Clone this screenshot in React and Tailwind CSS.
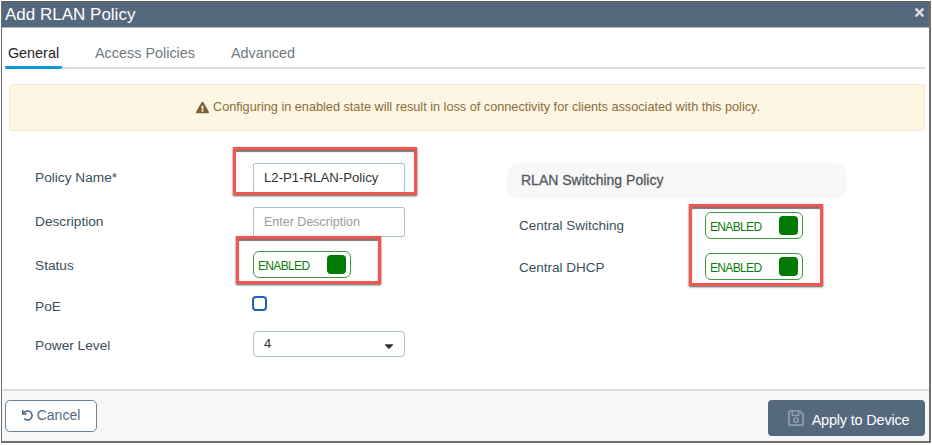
import React from 'react';
import { FaTimes, FaExclamationTriangle, FaUndo, FaRegSave, FaCaretDown } from 'react-icons/fa';

const Toggle = () => (
    <div className="w-[98px] h-[27px] border border-[#3f9a3f] rounded-[6px] bg-white flex items-center justify-between pl-[4px] pr-[4px]">
        <span className="text-[12px] tracking-[-0.65px] text-[#0a7d0a] pt-[2px]">ENABLED</span>
        <span className="w-[19px] h-[19px] rounded-[4px] bg-[#007a00]"></span>
    </div>
);

// red annotation frame that sits over the field
const Highlight = ({ className }) => (
    <div className={`absolute border-[3px] border-[#f2574e] shadow-[0_1px_2px_#555,inset_0_2px_1px_#777] pointer-events-none ${className}`}></div>
);

const Row = ({ label, labelClass, className, children }) => (
    <div className={`flex items-center ${className}`}>
        <span className={`w-[218px] text-[13.7px] text-[#39505a] ${labelClass}`}>{label}</span>
        <div className="relative">{children}</div>
    </div>
);

const inputClass = "w-[152px] h-[30px] border border-[#a6c4d2] rounded-[2px] px-[10px] flex items-center";

const App = () => {
    return (
        <div className="w-[932px] h-[445px] bg-white font-['Liberation_Sans',sans-serif] pt-px pl-px pr-px pb-[2px]">
            <div className="h-full border-l border-r-2 border-b-2 border-[#6e6e6e] flex flex-col">

                {/* Title bar */}
                <div className="h-[27px] shrink-0 bg-[#54697e] border-t border-[#5c5c5c] border-b border-b-[#a9b6c2] flex items-center justify-between pl-[3px] pr-[3px]">
                    <span className="text-[17px] text-white">Add RLAN Policy</span>
                    <FaTimes className="text-[#d9dfe4] mb-[4px]" size={13} />
                </div>

                {/* Tabs */}
                <div className="h-[41px] shrink-0 ml-[3px] mr-[4px] border-b-2 border-[#dcdcdc] flex items-end text-[14.4px]">
                    <div className="w-[57px] h-[27px] pt-[1px] -mb-[2px] border-b-[3px] border-[#0d9ad8] rounded-b-[2px] text-center text-[#1d2327]">General</div>
                    <div className="ml-[33px] h-[27px] pt-[3px] text-[#6f7a80]">Access Policies</div>
                    <div className="ml-[36px] h-[27px] pt-[3px] text-[#6f7a80]">Advanced</div>
                </div>

                {/* Warning */}
                <div className="h-[47px] shrink-0 mt-[15px] ml-[7px] mr-[4px] pl-[22px] bg-[#fdf6e3] border border-[#f7e9c9] rounded-[3px] flex items-center justify-center gap-[4px] text-[12.7px] text-[#8a6d3b]">
                    <FaExclamationTriangle className="text-[#7d6032]" size={13} />
                    <span>Configuring in enabled state will result in loss of connectivity for clients associated with this policy.</span>
                </div>

                {/* Form */}
                <div className="flex-1 flex pt-[32px] pl-[33px]">
                    <div className="w-[472px] flex flex-col">
                        <Row label="Policy Name*" className="h-[30px]">
                            <div className={`${inputClass} text-[13.2px] text-[#333]`}>L2-P1-RLAN-Policy</div>
                            <Highlight className="-left-[20px] -right-[12px] -top-[16px] -bottom-[2px]" />
                        </Row>
                        <Row label="Description" className="h-[30px] mt-[14px]">
                            <div className={`${inputClass} text-[12.5px] text-[#9a9a9a]`}>Enter Description</div>
                        </Row>
                        <Row label="Status" labelClass="pt-[4px]" className="h-[27px] mt-[14px]">
                            <Toggle />
                            <Highlight className="-left-[17px] -right-[30px] -top-[15px] -bottom-[6px]" />
                        </Row>
                        <div className="flex items-start h-[53px]">
                            <span className="w-[217px] mt-[19px] text-[13.7px] text-[#39505a]">PoE</span>
                            <span className="mt-[18px] w-[15px] h-[15px] border-2 border-[#1f5fbf] rounded-[4px] bg-white"></span>
                        </div>
                        <Row label="Power Level" labelClass="pt-[4px]" className="h-[26px]">
                            <div className="w-[152px] h-[26px] border border-[#a6c4d2] rounded-[4px] pl-[10px] pr-[8px] flex items-center justify-between text-[13px] text-[#333]">
                                <span>4</span>
                                <FaCaretDown className="text-[#333] mt-[4px]" size={14} />
                            </div>
                        </Row>
                    </div>

                    <div className="w-[340px]">
                        <div className="h-[36px] bg-[#f8f8f8] rounded-[12px] pl-[14px] pb-[2px] flex items-center text-[14px] text-[#54585c]">
                            <span className="[-webkit-text-stroke:0.3px_#54585c]">RLAN Switching Policy</span>
                        </div>
                        <div className="relative mt-[13px] pl-[12px] flex flex-col gap-[14px]">
                            <div className="flex items-center">
                                <span className="w-[186px] pt-[2px] text-[13.5px] text-[#39505a]">Central Switching</span>
                                <Toggle />
                            </div>
                            <div className="flex items-center">
                                <span className="w-[186px] pt-[4px] text-[13.5px] text-[#39505a]">Central DHCP</span>
                                <Toggle />
                            </div>
                            <Highlight className="left-[182px] w-[134px] -top-[8px] -bottom-[6px]" />
                        </div>
                    </div>
                </div>

                {/* Footer */}
                <div className="h-[52px] shrink-0 bg-[#f7f7f7] border-t-2 border-[#dcdcdc] flex items-center justify-between pl-[3px] pr-[4px]">
                    <button className="w-[92px] h-[32px] pb-[2px] bg-white border border-[#6a8299] rounded-[5px] flex items-center justify-center gap-[4px] text-[14px] text-[#54697e]">
                        <FaUndo size={11} />
                        <span>Cancel</span>
                    </button>
                    <button className="w-[157px] h-[36px] mt-[4px] pl-[3px] bg-[#54697e] rounded-[4px] flex items-center justify-center gap-[7px] text-[14.5px] tracking-[-0.2px] text-white">
                        <FaRegSave className="text-[#8da0b0]" size={18} />
                        <span className="pt-[5px]">Apply to Device</span>
                    </button>
                </div>

            </div>
        </div>
    );
};

export default App;
